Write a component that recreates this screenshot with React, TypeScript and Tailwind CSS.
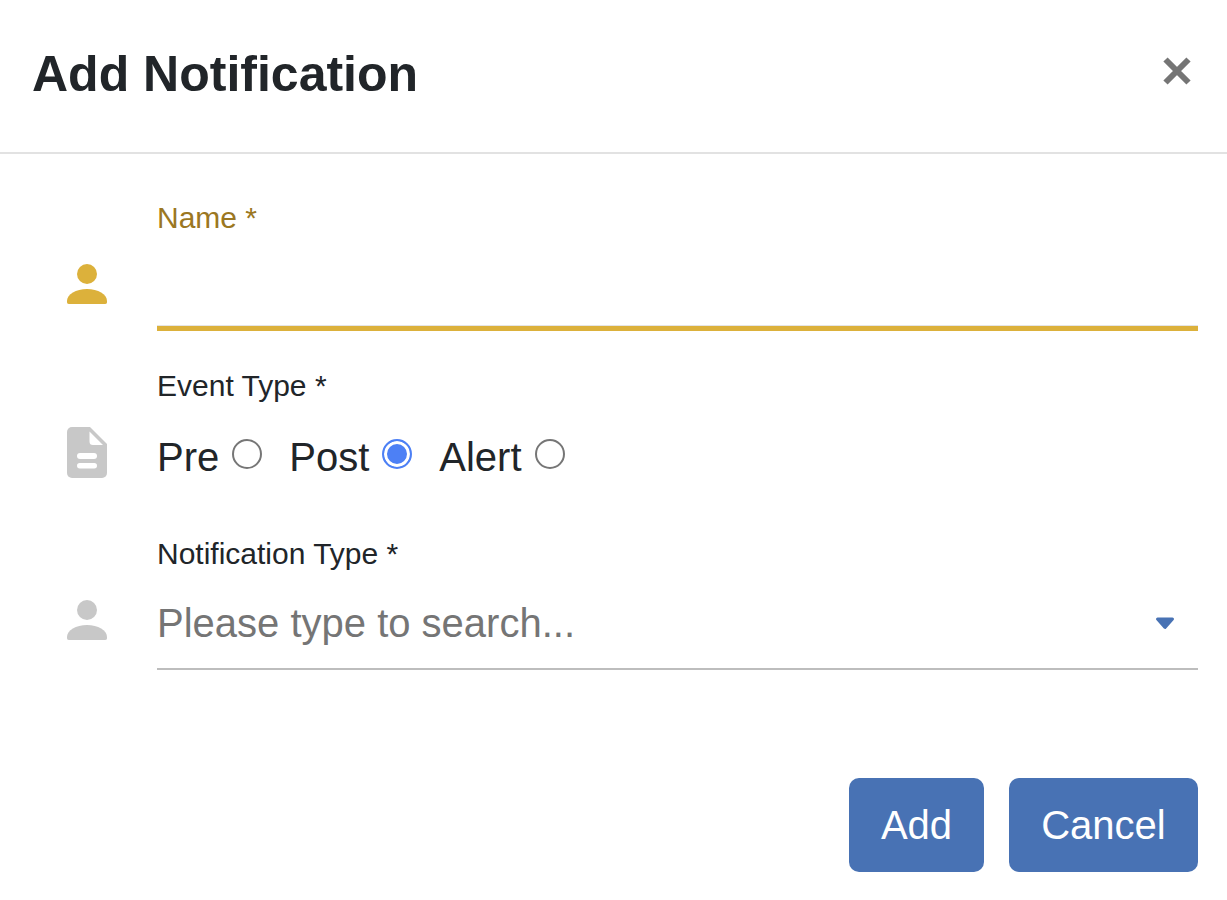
import { useState } from "react";

function PersonIcon({ className }: { className: string }) {
  return (
    <svg viewBox="0 0 40 40" className={className} fill="currentColor">
      <circle cx="20" cy="10" r="10" />
      <path d="M0 37 C0 30 9 25 20 25 C31 25 40 30 40 37 C40 39 40 40 38 40 H2 C0 40 0 39 0 37 Z" />
    </svg>
  );
}

function FileIcon({ className }: { className: string }) {
  return (
    <svg viewBox="0 0 40 51" className={className}>
      <path
        fill="currentColor"
        d="M5 0 H23 L40 17 V46 A5 5 0 0 1 35 51 H5 A5 5 0 0 1 0 46 V5 A5 5 0 0 1 5 0 Z"
      />
      <path fill="#fff" d="M22.5 4.5 L36 18 H26 A3.5 3.5 0 0 1 22.5 14.5 Z" />
      <rect x="10" y="26" width="20" height="6" rx="3" fill="#fff" />
      <rect x="10" y="36" width="20" height="5.5" rx="2.75" fill="#fff" />
    </svg>
  );
}

export default function App() {
  const [eventType, setEventType] = useState("Post");

  return (
    <div className="w-[1227px] h-[900px] bg-white text-[#212529] font-['Liberation_Sans',Arial,sans-serif] overflow-hidden">
      {/* header */}
      <div className="h-[154px] border-b-2 border-[#e2e2e2] flex items-start justify-between pl-[32px] pr-[35px] pt-[44px]">
        <h1 className="text-[50px] leading-[60px] font-bold">Add Notification</h1>
        <button className="mt-[12px] w-[30px] h-[30px] text-[#757575]">
          <svg viewBox="0 0 30 30" className="w-[30px] h-[30px]">
            <path d="M3.5 3.5 L26.5 26.5 M26.5 3.5 L3.5 26.5" stroke="currentColor" strokeWidth="6" />
          </svg>
        </button>
      </div>

      {/* form */}
      <div className="pl-[67px] pr-[29px] pt-[48px] flex flex-col">
        <div className="flex items-end h-[129px]">
          <div className="w-[90px] pb-[27px] text-[#dcb13b]">
            <PersonIcon className="w-[40px] h-[40px]" />
          </div>
          <div className="flex-1 h-full flex flex-col justify-between">
            <label className="text-[30px] leading-[32px] text-[#9b7722]">Name *</label>
            <input className="h-[40px] outline-none border-b-[5px] border-[#dcb13b] shadow-[inset_0_-1px_0_#e5e5e5]" />
          </div>
        </div>

        <div className="flex items-end mt-[39px] h-[120px]">
          <div className="w-[90px] pb-[12px] text-[#c8c8c8]">
            <FileIcon className="w-[40px] h-[51px]" />
          </div>
          <div className="flex-1 h-full">
            <label className="block text-[30px] leading-[32px]">Event Type *</label>
            <div className="flex items-center mt-[32px] text-[40px] leading-[46px]">
              {["Pre", "Post", "Alert"].map((t) => (
                <label key={t} className="flex items-center mr-[27px]">
                  {t}
                  <input
                    type="radio"
                    name="eventType"
                    checked={eventType === t}
                    onChange={() => setEventType(t)}
                    className="appearance-none ml-[13px] mb-[6px] w-[30px] h-[30px] rounded-full border-[2.5px] border-[#767676] checked:border-[#4d80f5] checked:bg-[#4d80f5] checked:shadow-[inset_0_0_0_3px_#fff]"
                  />
                </label>
              ))}
            </div>
          </div>
        </div>

        <div className="flex items-start mt-[48px]">
          <div className="w-[90px] pt-[62px] text-[#c8c8c8]">
            <PersonIcon className="w-[40px] h-[40px]" />
          </div>
          <div className="flex-1">
            <label className="block text-[30px] leading-[32px]">Notification Type *</label>
            <div className="mt-[8px] h-[92px] border-b-2 border-[#bdbdbd] flex items-center justify-between pr-[23px]">
              <span className="text-[40px] leading-[46px] text-[#757575]">Please type to search...</span>
              <svg viewBox="0 0 20 13" className="w-[20px] h-[13px] text-[#4872b4]">
                <path
                  d="M2.5 2 H17.5 L10 10.5 Z"
                  fill="currentColor"
                  stroke="currentColor"
                  strokeWidth="3"
                  strokeLinejoin="round"
                />
              </svg>
            </div>
          </div>
        </div>

        <div className="flex justify-end gap-[25px] mt-[108px]">
          <button className="w-[135px] h-[94px] rounded-[10px] bg-[#4872b4] text-white text-[40px]">Add</button>
          <button className="w-[189px] h-[94px] rounded-[10px] bg-[#4872b4] text-white text-[40px]">Cancel</button>
        </div>
      </div>
    </div>
  );
}
